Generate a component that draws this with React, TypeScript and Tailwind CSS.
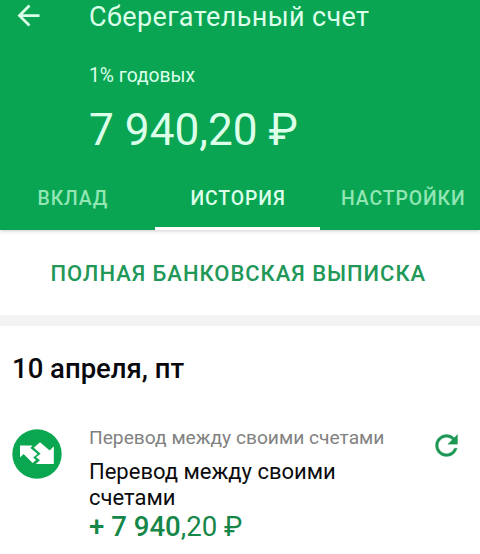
import React from "react";

const tabs = [
  { label: "ВКЛАД", active: false, box: "w-[155px] pl-[37.5px]" },
  { label: "ИСТОРИЯ", active: true, box: "w-[165px] pl-[35.5px]" },
  { label: "НАСТРОЙКИ", active: false, box: "w-[160px] pl-[21px]" },
];

function BackIcon() {
  return (
    <svg viewBox="0 0 24 24" className="-mt-[3px] size-[33px] fill-[#dcffea]">
      <path d="M20 11H7.83l5.59-5.59L12 4l-8 8 8 8 1.41-1.41L7.83 13H20v-2z" />
    </svg>
  );
}

function TransferIcon() {
  return (
    <svg viewBox="0 0 50 50" className="size-[50px] shrink-0">
      <circle cx="25" cy="25" r="24.7" fill="#0ba750" />
      <path fill="#fff" d="M8 16.5H20.6L18.4 18.9L25.6 25L21.2 28.4L24 31L20.6 34L11.6 25L8 28.6Z" />
      <path
        fill="#fff"
        d="M28 13.2L37.7 21.6L41.8 17.2V34.9H23.8L27.9 31.3L24 28.2L28.6 24.7L21.8 18.7Z"
      />
    </svg>
  );
}

function RepeatIcon() {
  return (
    <svg viewBox="0 0 24 24" className="size-[33px] fill-[#1c9753] stroke-[#1c9753] stroke-[0.25]">
      <path d="M17.65 6.35C16.2 4.9 14.21 4 12 4c-4.42 0-7.99 3.58-7.99 8s3.57 8 7.99 8c3.73 0 6.84-2.55 7.73-6h-2.08c-.82 2.33-3.04 4-5.65 4-3.31 0-6-2.69-6-6s2.69-6 6-6c1.66 0 3.14.69 4.22 1.78L13 11h7V4l-2.35 2.35z" />
    </svg>
  );
}

export default function App() {
  return (
    <div className="h-[554px] w-[480px] overflow-hidden bg-white font-['Roboto',sans-serif] whitespace-nowrap">
      <header className="flex h-[230px] flex-col bg-[#09a552] text-[#dcffea] shadow-[0_1px_4px_rgba(0,0,0,0.2)]">
        <div className="flex h-[34px] shrink-0 items-center pl-[12px]">
          <BackIcon />
          <h1 className="ml-[44px] text-[27px] leading-[34px] tracking-[0.37px]">Сберегательный счет</h1>
        </div>
        <p className="mt-[30px] pl-[89px] text-[19.3px] leading-[24px]">1% годовых</p>
        <p className="mt-[15px] pl-[89px] text-[44.2px] leading-[54px]">7 940,20 ₽</p>
        <nav className="mt-auto flex h-[65px] shrink-0">
          {tabs.map((tab) => (
            <div
              key={tab.label}
              className={`${tab.box} ${
                tab.active ? "border-b-[3px] border-white text-[#dcffea]" : "text-[#91e6b4]"
              } pt-[22px] text-[19.4px] leading-[24px] font-medium tracking-[0.9px]`}
            >
              {tab.label}
            </div>
          ))}
        </nav>
      </header>
      <button className="block h-[85px] w-full pl-[50.5px] text-left text-[22px] leading-[87px] font-medium tracking-[0.96px] text-[#219858]">
        ПОЛНАЯ БАНКОВСКАЯ ВЫПИСКА
      </button>
      <div className="h-[11px] bg-[#f3f3f3]" />
      <h2 className="mt-[26px] pl-[12px] text-[27.5px] leading-[34px] font-medium text-[#08080c]">10 апреля, пт</h2>
      <div className="mt-[38px] flex">
        <div className="ml-[12px] pt-[5px]">
          <TransferIcon />
        </div>
        <div className="ml-[27px] w-[341px]">
          <p className="text-[19.2px] leading-[28px] text-[#818181]">Перевод между своими счетами</p>
          <p className="mt-[7px] text-[22px] leading-[26px] text-[#0b0b0d]">
            Перевод между своими
            <br />
            счетами
          </p>
          <p className="text-[27.6px] leading-[32px] text-[#168748]">
            <span className="font-medium">+ 7 940</span>,20 ₽
          </p>
        </div>
        <div className="pt-[5px]">
          <RepeatIcon />
        </div>
      </div>
    </div>
  );
}
